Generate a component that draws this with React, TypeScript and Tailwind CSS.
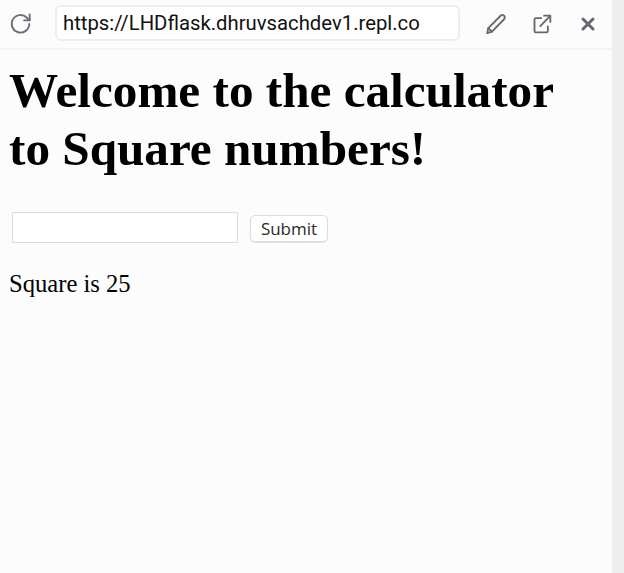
import React from "react";

export default function App() {
  return (
    <div className="flex h-[573px] w-[624px] overflow-hidden bg-[#fcfcfd]">
      <div className="flex w-[612px] flex-col">
        <header className="flex h-[50px] items-center border-b-2 border-[#f3f3f5] pb-[1px]">
          <svg className="ml-[9px] mb-[1px] h-[23px] w-[23px]" viewBox="0 0 22 22" fill="none" stroke="#6b6f76" strokeWidth="1.8" strokeLinecap="round" strokeLinejoin="round">
            <path d="M19.4 11.5a8.4 8.4 0 1 1-2.5-6.2L19.6 8" />
            <path d="M19.8 2.4V8h-5.4" />
          </svg>
          <div className="ml-[23px] mb-[1px] flex h-[36px] w-[405px] items-center rounded-[6px] border-2 border-[#eeeef0] bg-white pl-[6px] text-[20.3px] text-[#111] [font-family:'Roboto',sans-serif]">
            https://LHDflask.dhruvsachdev1.repl.co
          </div>
          <svg className="ml-[25px] h-[22px] w-[22px]" viewBox="0 0 24 24" fill="none" stroke="#65686e" strokeWidth="2" strokeLinecap="round" strokeLinejoin="round">
            <path d="M2.4 22l1.2-5.6L17 3a2.6 2.6 0 0 1 3.8 3.8L7.6 20.4z" />
            <path d="M3.6 16.4l4 4" />
          </svg>
          <svg className="ml-[25px] h-[20px] w-[20px]" viewBox="0 0 24 24" fill="none" stroke="#65686e" strokeWidth="2.2" strokeLinecap="round" strokeLinejoin="round">
            <path d="M11 5H4.500A1.500 1.500 0 0 0 3 6.500v14A1.500 1.500 0 0 0 4.500 22h13a1.500 1.500 0 0 0 1.500-1.500V15" />
            <path d="M10 14.500L21.500 2.500" />
            <path d="M14.500 2h7.500v7.500" />
          </svg>
          <svg className="ml-[28px] h-[16px] w-[16px]" viewBox="0 0 16 16" fill="none" stroke="#65686e" strokeWidth="3" strokeLinecap="round">
            <path d="M3 3l10 10M13 3L3 13" />
          </svg>
        </header>
        <main className="px-[9px] text-black [font-family:'Liberation_Serif',serif]">
          <h1 className="mt-[12px] w-[570px] text-[49.2px] font-bold leading-[58px]">
            Welcome to the calculator to Square numbers!
          </h1>
          <form className="mt-[34px] flex items-end pl-[3px]">
            <div className="h-[31px] w-[226px] border-[1.5px] border-[#dcdcdc] bg-white" />
            <button type="button" className="mb-[1px] ml-[12px] flex h-[27px] w-[78px] items-center justify-center rounded-[5px] border border-[#dcdcdc] bg-white text-[17px] text-[#2a2a2a] shadow-[0_1px_1px_rgba(0,0,0,0.1)] [font-family:'Open_Sans',sans-serif]">
              Submit
            </button>
          </form>
          <p className="mt-[26px] text-[24.6px] leading-[30px]">Square is 25</p>
        </main>
      </div>
      <div className="w-[12px] bg-[#eeeef1]" />
    </div>
  );
}
